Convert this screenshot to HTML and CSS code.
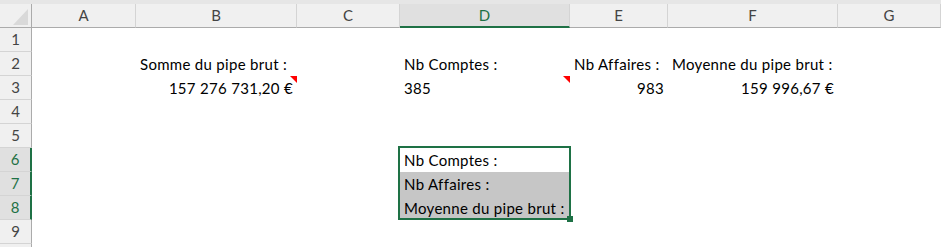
FILE: index.html
```html
<!DOCTYPE html>
<html lang="fr">

<head>
  <meta charset="UTF-8">
  <meta name="viewport" content="width=device-width, initial-scale=1.0">
  <title>Feuil1</title>
  <link rel="stylesheet" href="styles.css">
</head>

<body>
  <div class="topband"></div>
  <div class="sheet">
    <!-- en-tetes de colonnes -->
    <div class="corner">
      <svg width="32" height="24" viewBox="0 0 32 24"><polygon points="28,5 28,21 13,21" fill="#d9d9d9" /></svg>
    </div>
    <div class="col">A</div>
    <div class="col">B</div>
    <div class="col">C</div>
    <div class="col sel">D</div>
    <div class="col">E</div>
    <div class="col">F</div>
    <div class="col">G</div>

    <div class="row">1</div>

    <div class="row">2</div>
    <div class="cell b">Somme du pipe brut :</div>
    <div class="cell d">Nb Comptes :</div>
    <div class="cell e">Nb Affaires :</div>
    <div class="cell f">Moyenne du pipe brut :</div>

    <div class="row">3</div>
    <div class="cell b num note">157 276 731,20 €</div>
    <div class="cell d note">385</div>
    <div class="cell e num">983</div>
    <div class="cell f num">159 996,67 €</div>

    <div class="row">4</div>
    <div class="row">5</div>

    <div class="row sel">6</div>
    <div class="cell d">Nb Comptes :</div>

    <div class="row sel">7</div>
    <div class="cell d shade">Nb Affaires :</div>

    <div class="row sel">8</div>
    <div class="cell d shade">Moyenne du pipe brut :</div>

    <div class="row">9</div>
    <div class="row"></div>

    <div class="selection"></div>
  </div>
</body>

</html>
```

FILE: styles.css
```css
body {
  margin: 0;
  background-color: #fff;
  font-family: "Lato", "Open Sans", sans-serif;
  font-size: 15px;
  color: #000;
  overflow: hidden;
}

.topband {
  height: 4px;
  background-color: #e6e6e6;
}

.sheet {
  display: grid;
  grid-template-columns: 32px 104px 161px 103px 170px 98px 170px 103px;
  grid-auto-rows: 24px;
  position: relative;
}

.sheet > div {
  box-sizing: border-box;
}

.corner {
  background-color: #f0f0f0;
  border-right: 1px solid #ababab;
  border-bottom: 1px solid #ababab;
  font-size: 0;
}

.col {
  background-color: #f0f0f0;
  border-right: 1px solid #d4d4d4;
  border-bottom: 1px solid #ababab;
  text-align: center;
  line-height: 23px;
  color: #444;
}

.col.sel {
  background-color: #e0e0e0;
  border-bottom: 2px solid #1e7145;
  color: #1e7145;
}

.row {
  grid-column: 1;
  background-color: #f0f0f0;
  border-right: 1px solid #ababab;
  border-bottom: 1px solid #d4d4d4;
  text-align: center;
  line-height: 23px;
  color: #444;
}

.row.sel {
  background-color: #e0e0e0;
  border-right: 2px solid #1e7145;
  color: #1e7145;
}

.cell {
  padding: 0 4px;
  line-height: 24px;
  letter-spacing: 0.3px;
  white-space: nowrap;
  position: relative;
}

.cell.num {
  text-align: right;
}

.cell.b {
  grid-column: 3;
}

.cell.d {
  grid-column: 5;
}

.cell.e {
  grid-column: 6;
}

.cell.f {
  grid-column: 7;
}

.cell.shade {
  background-color: #c6c6c6;
}

/* indicateur de commentaire */
.cell.note::after {
  content: "";
  position: absolute;
  top: 0;
  right: 0;
  border-top: 7px solid #ff0000;
  border-left: 7px solid transparent;
}

.selection {
  position: absolute;
  left: 398px;
  top: 142px;
  width: 173px;
  height: 74px;
  border: 2px solid #1e7145;
  pointer-events: none;
}

.selection::after {
  content: "";
  position: absolute;
  left: 167px;
  top: 68px;
  width: 6px;
  height: 6px;
  background-color: #1e7145;
}
```
